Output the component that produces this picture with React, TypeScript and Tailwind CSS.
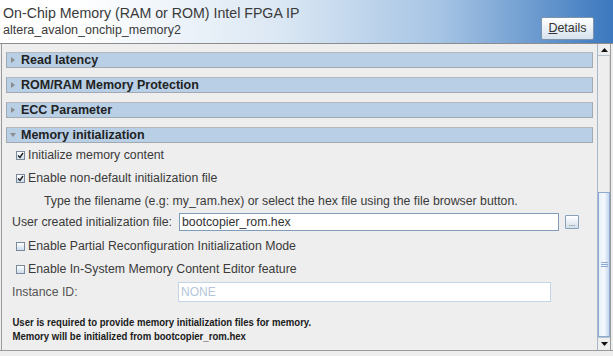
import React from 'react'

const font = { fontFamily: '"Liberation Sans", Arial, sans-serif' }

function Arrow({ open }: { open?: boolean }) {
  return open ? (
    <svg width="6" height="4" viewBox="0 0 6 4" className="shrink-0">
      <path d="M0 0 L6 0 L3 4 Z" fill="#8c8c8c" />
    </svg>
  ) : (
    <svg width="4" height="6" viewBox="0 0 4 6" className="shrink-0">
      <path d="M0 0 L4 3 L0 6 Z" fill="#8c8c8c" />
    </svg>
  )
}

function Section({ label, open }: { label: string; open?: boolean }) {
  return (
    <div className="flex h-[16px] items-center gap-[5px] border border-[#a2a9b1] border-t-[#b4b8bc] bg-[#b8cfe6] pl-[3px]">
      <div className="flex w-[6px] justify-center">
        <Arrow open={open} />
      </div>
      <span className="text-[12.5px] font-bold leading-none text-[#222]">{label}</span>
    </div>
  )
}

function Check({ checked, label }: { checked?: boolean; label: string }) {
  return (
    <div className="flex h-[23px] items-center pl-[14px]">
      <div className="flex h-[9px] w-[9px] items-center justify-center border border-[#7a8a99] bg-gradient-to-b from-white to-[#cddcec]">
        {checked && (
          <svg width="7" height="7" viewBox="0 0 7 7">
            <path d="M1 3.5 L3 5.5 L6 1" stroke="#222" strokeWidth="1.4" fill="none" />
          </svg>
        )}
      </div>
      <span className="ml-[3px] text-[12.3px] text-[#3a3a3a]">{label}</span>
    </div>
  )
}

export default function App() {
  return (
    <div className="flex h-[356px] w-[613px] flex-col overflow-hidden bg-[#eeeeee]" style={font}>
      {/* header */}
      <div className="flex h-[44px] shrink-0 justify-between border-b border-[#8c8c8c] bg-[linear-gradient(to_right,#ffffff_12%,#dce8f4_45%,#a6c4e4_72%,#3b78be_100%)] pl-[3px] pr-[19px]">
        <div className="pt-[4px] text-[#3a3a3a]">
          <div className="text-[14.2px] leading-[18px]">On-Chip Memory (RAM or ROM) Intel FPGA IP</div>
          <div className="text-[12.5px] leading-[16px]">altera_avalon_onchip_memory2</div>
        </div>
        <button className="mt-[17px] h-[23px] w-[53px] rounded-[2px] border border-[#7d93ab] bg-gradient-to-b from-white to-[#d6e2ee] text-[12.5px] text-[#333]">
          <span className="underline">D</span>etails
        </button>
      </div>

      {/* body */}
      <div className="flex h-[306px] shrink-0">
        <div className="ml-[1px] flex flex-1 flex-col border-l border-[#9a9a9a]">
          <div className="flex flex-col gap-[9px] px-[4px] pt-[8px]">
            <Section label="Read latency" />
            <Section label="ROM/RAM Memory Protection" />
            <Section label="ECC Parameter" />
            <Section label="Memory initialization" open />
          </div>
          <div className="flex flex-col pt-[1px]">
            <Check checked label="Initialize memory content" />
            <Check checked label="Enable non-default initialization file" />
            <div className="flex h-[22px] items-center pl-[42px] text-[12.3px] text-[#3a3a3a]">
              Type the filename (e.g: my_ram.hex) or select the hex file using the file browser button.
            </div>
            <div className="flex h-[20px] items-center pl-[10px]">
              <span className="w-[167px] text-[12.3px] text-[#3a3a3a]">User created initialization file:</span>
              <div className="flex h-[18px] w-[380px] items-center border border-[#7f9db9] bg-white pl-[2px] text-[12.3px] text-[#333]">
                bootcopier_rom.hex
              </div>
              <div className="ml-[6px] flex h-[14px] w-[14px] items-end justify-center rounded-[1px] border border-[#8aa0b8] bg-gradient-to-b from-white to-[#d3dfec] text-[8px] leading-[8px] text-[#444]">
                ...
              </div>
            </div>
            <div className="h-[3px]" />
            <Check label="Enable Partial Reconfiguration Initialization Mode" />
            <Check label="Enable In-System Memory Content Editor feature" />
            <div className="flex h-[22px] items-center pl-[10px]">
              <span className="w-[166px] text-[12.3px] text-[#555]">Instance ID:</span>
              <div className="flex h-[20px] w-[373px] items-center border border-[#c3d4e6] bg-white pl-[2px] text-[12px] text-[#b3c6d9]">
                NONE
              </div>
            </div>
            <div className="mt-[12px] origin-left scale-x-[0.87] pl-[12px] text-[11px] font-bold leading-[14px] text-[#1a1a1a]">
              <div>User is required to provide memory initialization files for memory.</div>
              <div>Memory will be initialized from bootcopier_rom.hex</div>
            </div>
          </div>
        </div>

        {/* scrollbar */}
        <div className="flex w-[13px] shrink-0 flex-col border-l border-[#a9b8c8]">
          <div className="flex h-[12px] items-center justify-center border-b border-[#b4c0cc] bg-[#eeeeee]">
            <svg width="7" height="4" viewBox="0 0 7 4">
              <path d="M0 4 L3.5 0 L7 4 Z" fill="#111" />
            </svg>
          </div>
          <div className="h-[136px] border-r border-[#d8d8d8] bg-[#eeeeee]" />
          <div className="flex h-[145px] flex-col items-center justify-center border border-[#8ea9d2] bg-gradient-to-r from-[#e6eff9] via-[#f6f9fd] to-[#c3d6ee]">
            <div className="flex flex-col gap-[1px]">
              <div className="h-[1px] w-[7px] bg-[#8ea9d2]" />
              <div className="h-[1px] w-[7px] bg-[#8ea9d2]" />
              <div className="h-[1px] w-[7px] bg-[#8ea9d2]" />
            </div>
          </div>
          <div className="flex h-[13px] items-center justify-center border-t border-[#b4c0cc] bg-[#eeeeee]">
            <svg width="7" height="4" viewBox="0 0 7 4">
              <path d="M0 0 L7 0 L3.5 4 Z" fill="#111" />
            </svg>
          </div>
        </div>
        <div className="w-[3px] shrink-0 border-l border-[#9a9a9a]" />
      </div>

      <div className="flex-1 border-t border-[#9a9a9a] bg-[#eeeeee]" />
    </div>
  )
}
